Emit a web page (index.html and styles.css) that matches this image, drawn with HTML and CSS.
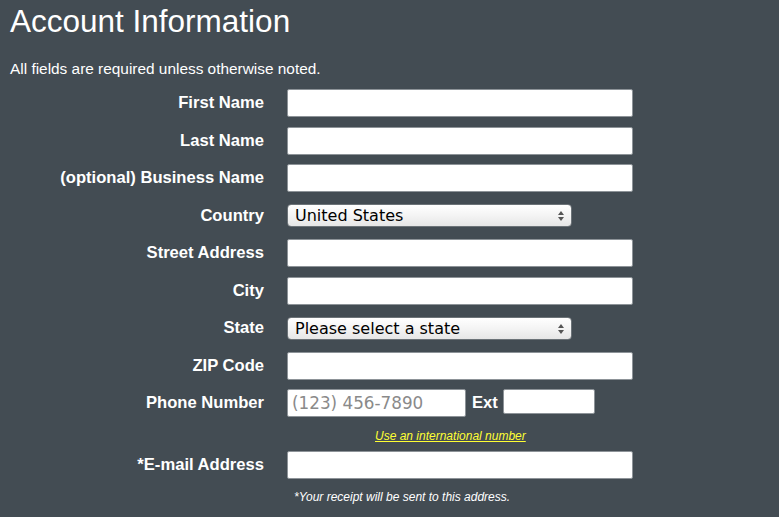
FILE: index.html
```html
<!DOCTYPE html>
<html>
<head>
  <meta charset="UTF-8">
  <title>Account Information</title>
  <link rel="stylesheet" href="styles.css">
</head>
<body>
  <h1 class="titulo">Account Information</h1>
  <p class="aviso">All fields are required unless otherwise noted.</p>

  <form class="formulario">
    <label class="etiqueta" for="first">First Name</label>
    <div class="campo"><input type="text" id="first" class="caja"></div>

    <label class="etiqueta" for="last">Last Name</label>
    <div class="campo"><input type="text" id="last" class="caja"></div>

    <label class="etiqueta" for="business">(optional) Business Name</label>
    <div class="campo"><input type="text" id="business" class="caja"></div>

    <label class="etiqueta" for="country">Country</label>
    <div class="campo">
      <div class="selector">
        <select id="country"><option>United States</option></select>
        <svg class="flechas" width="8" height="12" viewBox="0 0 8 12"><path d="M4 1 L7 5 L1 5 Z M4 11 L7 7 L1 7 Z" fill="#555"/></svg>
      </div>
    </div>

    <label class="etiqueta" for="street">Street Address</label>
    <div class="campo"><input type="text" id="street" class="caja"></div>

    <label class="etiqueta" for="city">City</label>
    <div class="campo"><input type="text" id="city" class="caja"></div>

    <label class="etiqueta" for="state">State</label>
    <div class="campo">
      <div class="selector">
        <select id="state"><option>Please select a state</option></select>
        <svg class="flechas" width="8" height="12" viewBox="0 0 8 12"><path d="M4 1 L7 5 L1 5 Z M4 11 L7 7 L1 7 Z" fill="#555"/></svg>
      </div>
    </div>

    <label class="etiqueta" for="zip">ZIP Code</label>
    <div class="campo"><input type="text" id="zip" class="caja"></div>

    <label class="etiqueta" for="phone">Phone Number</label>
    <div class="campo telefono">
      <input type="text" id="phone" class="caja caja-tel" placeholder="(123) 456-7890">
      <label class="etiqueta-ext" for="ext">Ext</label>
      <input type="text" id="ext" class="caja caja-ext">
    </div>

    <div></div>
    <div class="enlace-fila"><a href="#" class="enlace">Use an international number</a></div>

    <label class="etiqueta" for="email">*E-mail Address</label>
    <div class="campo"><input type="text" id="email" class="caja"></div>

    <div></div>
    <p class="nota">*Your receipt will be sent to this address.</p>
  </form>
</body>
</html>
```

FILE: styles.css
```css
html, body {
  margin: 0;
  background: #434c53;
  color: #fff;
  font-family: "Liberation Sans", Arial, sans-serif;
}

body {
  padding: 0 10px;
  height: 517px;
  overflow: hidden;
}

.titulo {
  font-weight: normal;
  font-size: 31.5px;
  margin: 0;
  padding-top: 4px;
  line-height: 34px;
}

.aviso {
  font-size: 15.4px;
  margin: 23px 0 0 0;
  line-height: 16px;
}

.formulario {
  display: grid;
  grid-template-columns: 254px 1fr;
  column-gap: 23px;
  row-gap: 9.5px;
  margin-top: 12px;
  align-items: center;
}

.etiqueta {
  text-align: right;
  font-weight: bold;
  font-size: 16.6px;
  line-height: 28px;
}

.campo {
  height: 28px;
  display: flex;
  align-items: center;
}

.caja {
  box-sizing: border-box;
  width: 346px;
  height: 28px;
  border: 1px solid #8d9398;
  border-radius: 2px;
  background: #fff;
  padding: 0 4px;
  font-family: "DejaVu Sans", sans-serif;
  font-size: 16.8px;
  outline: none;
}

.caja::placeholder {
  color: #8a8a8a;
}

.selector {
  position: relative;
  width: 285px;
  height: 23px;
}

.selector select {
  -webkit-appearance: none;
  appearance: none;
  box-sizing: border-box;
  width: 100%;
  height: 23px;
  border: 1px solid #6c7378;
  border-radius: 4px;
  background: linear-gradient(#ffffff, #f4f4f4 50%, #e6e6e6);
  font-family: "DejaVu Sans", sans-serif;
  font-size: 16px;
  color: #000;
  padding: 0 0 0 7px;
  margin: 0;
}

.flechas {
  position: absolute;
  right: 7px;
  top: 6px;
}

.telefono {
  align-items: flex-start;
}

.caja-tel {
  width: 179px;
}

.etiqueta-ext {
  font-weight: bold;
  font-size: 16.6px;
  line-height: 28px;
  margin: 0 5px 0 6px;
}

.caja-ext {
  width: 92px;
  height: 25px;
}

.enlace-fila {
  padding-left: 88px;
  height: 15px;
  line-height: 15px;
}

.enlace {
  color: #ffff33;
  font-style: italic;
  font-size: 12px;
  text-decoration: underline;
}

.nota {
  margin: 0;
  padding-left: 7px;
  font-style: italic;
  font-size: 12px;
  line-height: 16px;
}
```
